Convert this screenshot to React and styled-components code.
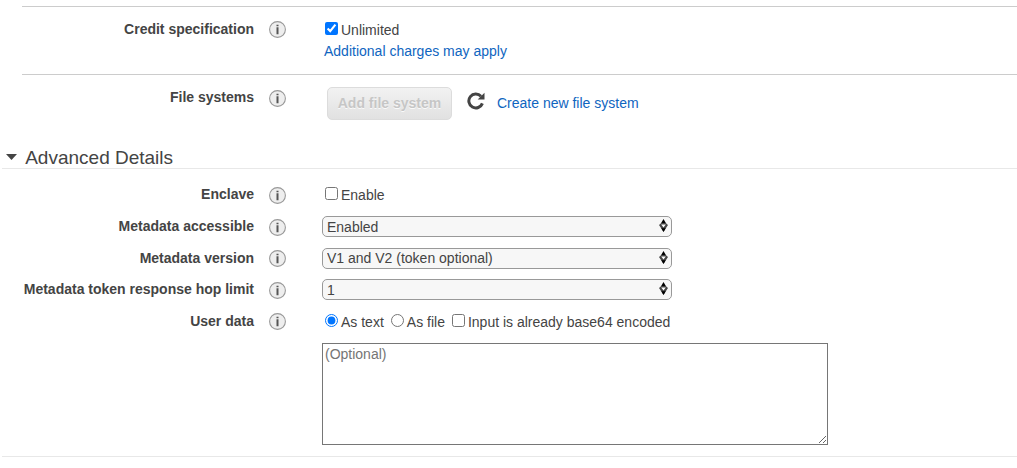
import React from "react";
import styled, { createGlobalStyle } from "styled-components";

const GlobalStyle = createGlobalStyle`
  *, *::before, *::after { box-sizing: border-box; }
  body {
    margin: 0;
    background: #fff;
    color: #444;
    font: 14px/16px "Liberation Sans", Arial, sans-serif;
    overflow: hidden;
  }
`;

const Page = styled.main`
  display: flex;
  flex-direction: column;
  width: 1017px;
  height: 468px;
  padding-top: 6px;
`;

const Row = styled.div`
  display: grid;
  grid-template-columns: 254px 17px 1fr;
  column-gap: 15px;
  align-items: start;
  flex: none;
  height: ${(p) => p.$height}px;
`;

const Rule = styled.hr`
  flex: none;
  width: auto;
  height: 1px;
  margin: 0 0 0 ${(p) => p.$indent}px;
  border: 0;
  background: ${(p) => p.$color};
`;

const Label = styled.div`
  padding-top: ${(p) => p.$top}px;
  font-weight: bold;
  text-align: right;
  white-space: nowrap;
`;

const InfoSvg = styled.svg`
  display: block;
  width: 17px;
  height: 17px;
  margin-top: ${(p) => p.$top}px;
`;

const Field = styled.div`
  padding-top: ${(p) => p.$top}px;
  padding-left: 21px;
`;

const Options = styled.div`
  display: flex;
  align-items: flex-start;
  padding-left: 3px;
`;

const Option = styled.label`
  display: flex;
  align-items: flex-start;
  margin-right: ${(p) => p.$gap || 0}px;
  white-space: nowrap;
`;

const Toggle = styled.input`
  width: 13px;
  height: 13px;
  margin: 0 3px 0 0;
`;

const OptionText = styled.span`
  display: block;
  height: 16px;
`;

const Link = styled.a`
  color: #0f65c0;
  text-decoration: none;
`;

const ChargesLink = styled(Link)`
  display: block;
  margin: 5px 0 0 2px;
`;

const Actions = styled.div`
  display: flex;
  align-items: center;
  padding-left: 5px;
`;

const Button = styled.button`
  width: 125px;
  height: 33px;
  padding: 0 0 2px;
  border: 1px solid #dcdcdc;
  border-radius: 5px;
  background: linear-gradient(#f2f2f2, #e1e1e1);
  color: #c6c6c6;
  font: bold 14px/16px "Liberation Sans", Arial, sans-serif;
  text-shadow: 0 1px 0 #fafafa;
  white-space: nowrap;
`;

const RefreshSvg = styled.svg`
  width: 18px;
  height: 18px;
  margin: 0 12px 5px 15px;
`;

const CreateLink = styled(Link)`
  padding-bottom: 2px;
`;

const SectionHeader = styled.h2`
  display: flex;
  align-items: flex-start;
  flex: none;
  height: 21px;
  margin: 0;
  padding-left: 6px;
  font-size: 19px;
  font-weight: normal;
  line-height: 22px;
`;

const Caret = styled.svg`
  width: 11px;
  height: 6px;
  margin: 7px 8.2px 0 0;
`;

const SelectWrap = styled.div`
  position: relative;
  width: 350px;
  height: 21px;
`;

const Select = styled.select`
  display: block;
  appearance: none;
  width: 350px;
  height: 21px;
  margin: 0;
  padding: ${(p) => (p.$raised ? "0 20px 2px 4px" : "1px 20px 0 4px")};
  border: 1px solid #999;
  border-radius: 5px;
  background: #f7f7f7;
  color: #444;
  font: 14px/16px "Liberation Sans", Arial, sans-serif;
`;

const Arrows = styled.svg`
  position: absolute;
  right: 4px;
  top: 3px;
  width: 9px;
  height: 13px;
  pointer-events: none;
`;

const TextArea = styled.textarea`
  display: block;
  width: 506px;
  height: 102px;
  margin: 13px 0 0;
  padding: 2px;
  border: 1px solid #767676;
  border-radius: 0;
  font: 14px/16px "Liberation Sans", Arial, sans-serif;
  &::placeholder { color: #757575; }
`;

function Info({ top }) {
  return (
    <InfoSvg $top={top} viewBox="0 0 17 17">
      <circle cx="8.5" cy="8.5" r="7.9" fill="#eee" stroke="#999" strokeWidth="1.1" />
      <path d="M7.5 3.7h2v1.5h-2zM7.5 6.2h2v7h-2z" fill="#555" />
    </InfoSvg>
  );
}

function FormRow({ label, height, labelTop, infoTop, fieldTop, children }) {
  return (
    <Row $height={height}>
      <Label $top={labelTop}>{label}</Label>
      <Info top={infoTop} />
      <Field $top={fieldTop}>{children}</Field>
    </Row>
  );
}

function Choice({ type, name, text, gap, checked }) {
  return (
    <Option $gap={gap}>
      <Toggle type={type} name={name} defaultChecked={checked} />
      <OptionText>{text}</OptionText>
    </Option>
  );
}

function Dropdown({ value, raised }) {
  return (
    <SelectWrap>
      <Select $raised={raised} defaultValue={value}>
        <option>{value}</option>
      </Select>
      <Arrows viewBox="0 0 9 13">
        <path d="M4.5 0L7.3 4.8H1.7z" fill="#000" />
        <path d="M0 6l1.8-1.5h5.4L9 6 4.5 12.8z" fill="#444" />
        <path d="M4.5 13L6.8 9.3H2.2z" fill="#000" />
        <path d="M2.2 5.6h4.6L4.5 8.4z" fill="#fff" />
      </Arrows>
    </SelectWrap>
  );
}

export default function App() {
  return (
    <>
      <GlobalStyle />
      <Page>
        <Rule $indent={22} $color="#ccc" />
        <FormRow label="Credit specification" height={67} labelTop={14} infoTop={14} fieldTop={15}>
          <Options>
            <Choice type="checkbox" text="Unlimited" checked />
          </Options>
          <ChargesLink href="#">Additional charges may apply</ChargesLink>
        </FormRow>
        <Rule $indent={22} $color="#ccc" />
        <FormRow label="File systems" height={72} labelTop={14} infoTop={15} fieldTop={12}>
          <Actions>
            <Button disabled>Add file system</Button>
            <RefreshSvg viewBox="0 0 18 18">
              <path d="M14 4.2A7 7 0 1 0 15.4 11.4" fill="none" stroke="#444" strokeWidth="3" />
              <path d="M17.5 0.8V7.6H10.7z" fill="#444" />
            </RefreshSvg>
            <CreateLink href="#">Create new file system</CreateLink>
          </Actions>
        </FormRow>
        <SectionHeader>
          <Caret viewBox="0 0 11 6">
            <path d="M0 0h11L5.5 6z" fill="#444" />
          </Caret>
          Advanced Details
        </SectionHeader>
        <Rule $indent={2} $color="#e8e8e8" />
        <FormRow label="Enclave" height={47} labelTop={17} infoTop={18} fieldTop={18}>
          <Options>
            <Choice type="checkbox" text="Enable" />
          </Options>
        </FormRow>
        <FormRow label="Metadata accessible" height={32} labelTop={2} infoTop={3} fieldTop={0}>
          <Dropdown value="Enabled" />
        </FormRow>
        <FormRow label="Metadata version" height={31} labelTop={2} infoTop={2} fieldTop={0}>
          <Dropdown value="V1 and V2 (token optional)" raised />
        </FormRow>
        <FormRow label="Metadata token response hop limit" height={32} labelTop={2} infoTop={3} fieldTop={0}>
          <Dropdown value="1" />
        </FormRow>
        <FormRow label="User data" height={145} labelTop={2} infoTop={2} fieldTop={3}>
          <Options>
            <Choice type="radio" name="userdata" text="As text" gap={7} checked />
            <Choice type="radio" name="userdata" text="As file" gap={7} />
            <Choice type="checkbox" text="Input is already base64 encoded" />
          </Options>
          <TextArea placeholder="(Optional)" />
        </FormRow>
        <Rule $indent={2} $color="#e8e8e8" />
      </Page>
    </>
  );
}
